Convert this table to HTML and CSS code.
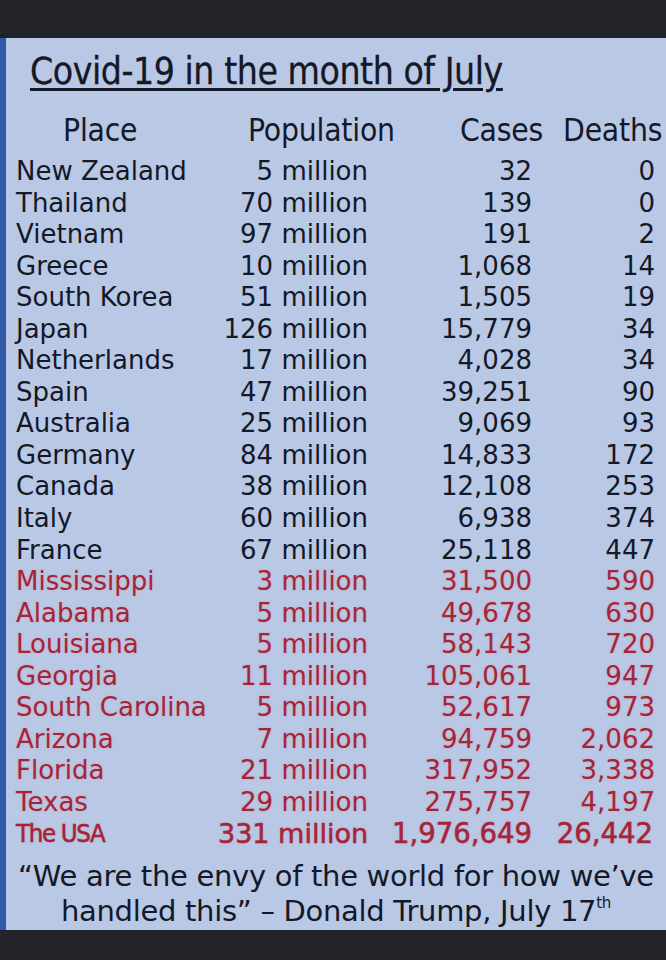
FILE: index.html
```html
<!DOCTYPE html>
<html>
<head>
<meta charset="utf-8">
<link rel="stylesheet" href="styles.css">
</head>
<body>
<div class="topbar"></div>
<main class="sheet">
  <h1 class="title">Covid-19 in the month of July</h1>
  <div class="head">
    <span class="h-place">Place</span>
    <span class="h-pop">Population</span>
    <span class="h-cases">Cases</span>
    <span class="h-deaths">Deaths</span>
  </div>
  <div class="table">
    <span>New Zealand</span><span class="n">5 million</span><span class="n">32</span><span class="n">0</span>
    <span>Thailand</span><span class="n">70 million</span><span class="n">139</span><span class="n">0</span>
    <span>Vietnam</span><span class="n">97 million</span><span class="n">191</span><span class="n">2</span>
    <span>Greece</span><span class="n">10 million</span><span class="n">1,068</span><span class="n">14</span>
    <span>South Korea</span><span class="n">51 million</span><span class="n">1,505</span><span class="n">19</span>
    <span>Japan</span><span class="n">126 million</span><span class="n">15,779</span><span class="n">34</span>
    <span>Netherlands</span><span class="n">17 million</span><span class="n">4,028</span><span class="n">34</span>
    <span>Spain</span><span class="n">47 million</span><span class="n">39,251</span><span class="n">90</span>
    <span>Australia</span><span class="n">25 million</span><span class="n">9,069</span><span class="n">93</span>
    <span>Germany</span><span class="n">84 million</span><span class="n">14,833</span><span class="n">172</span>
    <span>Canada</span><span class="n">38 million</span><span class="n">12,108</span><span class="n">253</span>
    <span>Italy</span><span class="n">60 million</span><span class="n">6,938</span><span class="n">374</span>
    <span>France</span><span class="n">67 million</span><span class="n">25,118</span><span class="n">447</span>
    <span class="r">Mississippi</span><span class="r n">3 million</span><span class="r n">31,500</span><span class="r n">590</span>
    <span class="r">Alabama</span><span class="r n">5 million</span><span class="r n">49,678</span><span class="r n">630</span>
    <span class="r">Louisiana</span><span class="r n">5 million</span><span class="r n">58,143</span><span class="r n">720</span>
    <span class="r">Georgia</span><span class="r n">11 million</span><span class="r n">105,061</span><span class="r n">947</span>
    <span class="r">South Carolina</span><span class="r n">5 million</span><span class="r n">52,617</span><span class="r n">973</span>
    <span class="r">Arizona</span><span class="r n">7 million</span><span class="r n">94,759</span><span class="r n">2,062</span>
    <span class="r">Florida</span><span class="r n">21 million</span><span class="r n">317,952</span><span class="r n">3,338</span>
    <span class="r">Texas</span><span class="r n">29 million</span><span class="r n">275,757</span><span class="r n">4,197</span>
    <span class="r usa-name">The USA</span><span class="r n usa usa-pop">331 million</span><span class="r n usa">1,976,649</span><span class="r n usa usa-deaths">26,442</span>
  </div>
  <p class="quote">“We are the envy of the world for how we’ve<br>handled this” – Donald Trump, July 17<sup>th</sup></p>
</main>
<div class="bottombar"></div>
</body>
</html>
```
FILE: styles.css
```css
html, body {
  margin: 0;
  padding: 0;
  background: #232427;
}
body {
  width: 666px;
  height: 960px;
  overflow: hidden;
  color: #141827;
}
.topbar {
  height: 34px;
  background: #232427;
  border-bottom: 4px solid #1d2230;
}
.sheet {
  height: 892px;
  background: #b8c8e5;
  border-left: 6px solid #3459a6;
  box-sizing: border-box;
  padding-left: 10px;
  display: flex;
  flex-direction: column;
}
.bottombar {
  height: 30px;
  background: #232427;
  border-top: 2px solid #1b2230;
  box-sizing: border-box;
}
.title {
  margin: 10px 0 0 14px;
  font-family: "DejaVu Sans", sans-serif;
  font-stretch: condensed;
  font-weight: normal;
  font-size: 37px;
  line-height: 48px;
  text-decoration: underline;
  text-decoration-thickness: 3px;
  text-underline-offset: 4px;
  letter-spacing: -0.45px;
  align-self: flex-start;
  -webkit-text-stroke: 0.3px #141827;
}
.head {
  display: grid;
  grid-template-columns: 232px 212px 103px auto;
  font-family: "DejaVu Sans", sans-serif;
  font-stretch: condensed;
  font-size: 31.5px;
  line-height: 40px;
  margin-top: 14px;
  letter-spacing: -0.2px;
  white-space: nowrap;
}
.h-place { padding-left: 47px; }
.table {
  display: grid;
  grid-template-columns: 202px 150px 164px 123px;
  font-family: "DejaVu Sans", sans-serif;
  font-size: 26px;
  line-height: 31.55px;
  margin-top: 6px;
  white-space: nowrap;
}
.n { text-align: right; }
.r {
  color: #a32539;
  text-shadow: 0 0 2px rgba(240, 120, 140, 0.55);
}
.usa-name {
  font-stretch: condensed;
  font-size: 25.5px;
  letter-spacing: -1.3px;
  -webkit-text-stroke: 0.5px #a32539;
}
.usa {
  font-size: 27.5px;
  -webkit-text-stroke: 0.5px #a32539;
}
.usa-pop { font-size: 27px; }
.usa-deaths { padding-right: 2px; }
.quote {
  margin: 9px 0 0 0;
  padding-right: 10px;
  text-align: center;
  font-family: "DejaVu Sans", sans-serif;
  font-size: 29px;
  line-height: 35px;
  letter-spacing: -0.3px;
  white-space: nowrap;
}
.quote sup {
  font-size: 15px;
  vertical-align: 13px;
  line-height: 0;
}
```
